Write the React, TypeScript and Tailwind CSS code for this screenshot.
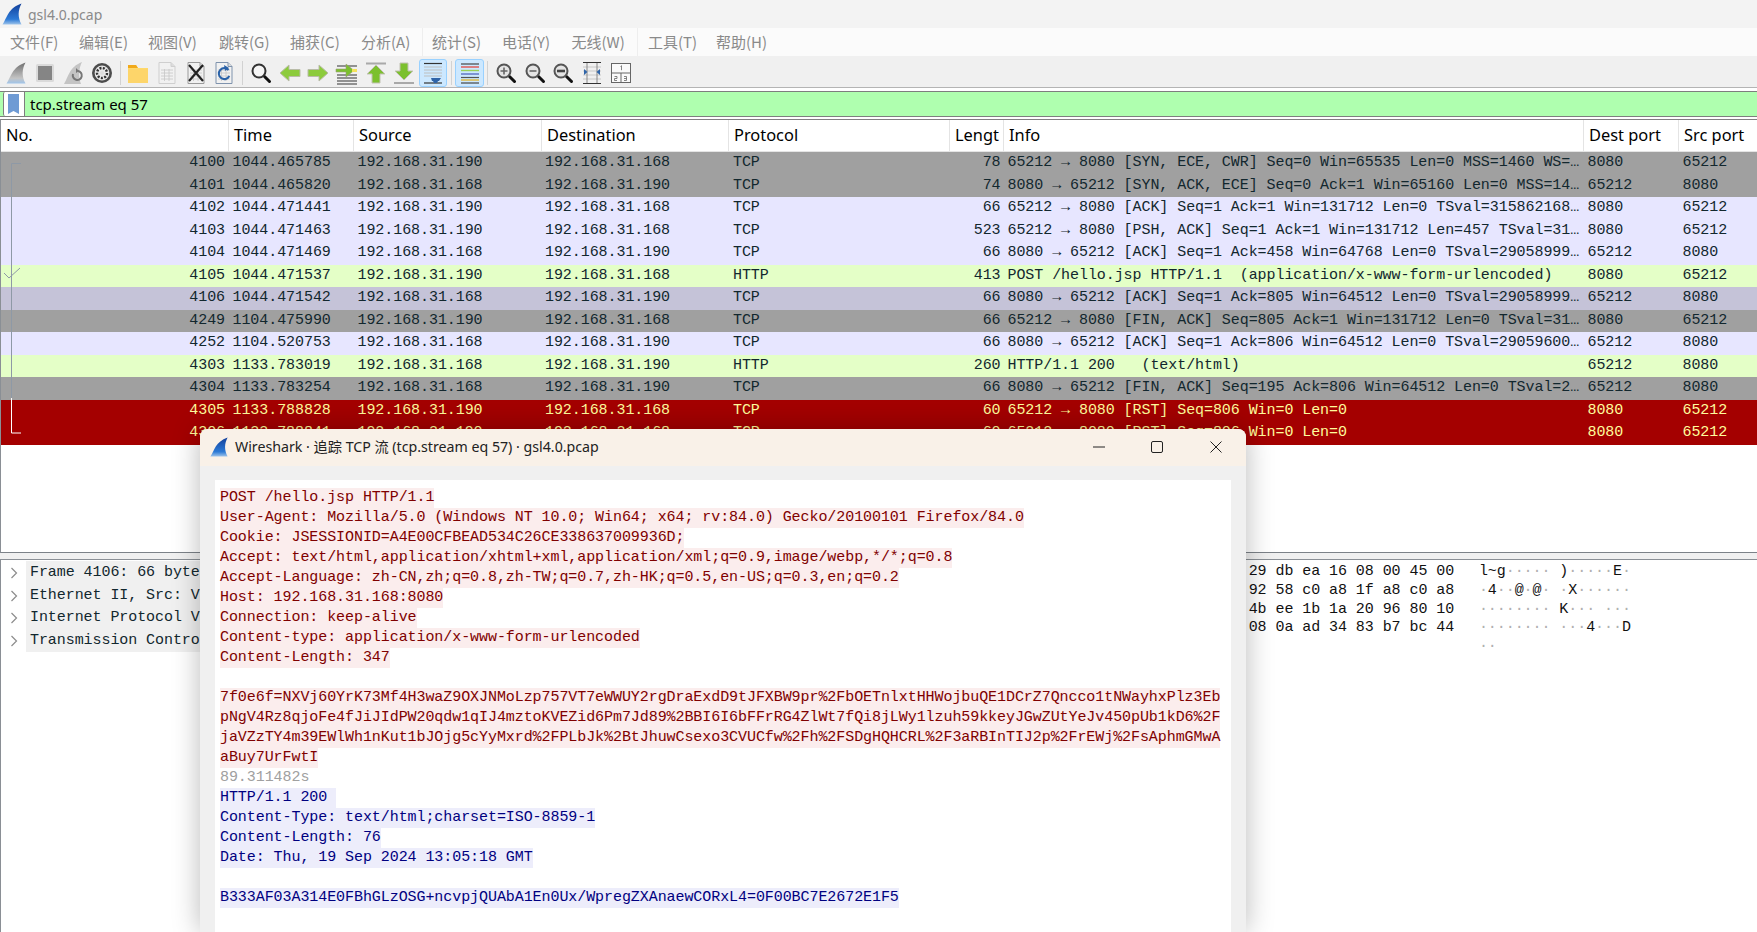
import React from "react";

const MONO = "[font-family:'Liberation_Mono',monospace] text-[15px] tracking-[-0.07px]";
const UI = "[font-family:'Noto_Sans','Noto_Sans_CJK_SC',sans-serif]";
const CJK = "[font-family:'Noto_Sans_CJK_SC','Noto_Sans',sans-serif]";

type Row = { n: number; t: string; s: string; d: string; p: string; l: number; i: string; dp: string; sp: string; k: string };
const A = "192.168.31.190";
const B = "192.168.31.168";
const rows: Row[] = [
  { n: 4100, t: "1044.465785", s: A, d: B, p: "TCP", l: 78, i: "65212 → 8080 [SYN, ECE, CWR] Seq=0 Win=65535 Len=0 MSS=1460 WS=…", dp: "8080", sp: "65212", k: "bg-[#a0a0a0] text-[#12272e]" },
  { n: 4101, t: "1044.465820", s: B, d: A, p: "TCP", l: 74, i: "8080 → 65212 [SYN, ACK, ECE] Seq=0 Ack=1 Win=65160 Len=0 MSS=14…", dp: "65212", sp: "8080", k: "bg-[#a0a0a0] text-[#12272e]" },
  { n: 4102, t: "1044.471441", s: A, d: B, p: "TCP", l: 66, i: "65212 → 8080 [ACK] Seq=1 Ack=1 Win=131712 Len=0 TSval=315862168…", dp: "8080", sp: "65212", k: "bg-[#e7e6ff] text-[#12272e]" },
  { n: 4103, t: "1044.471463", s: A, d: B, p: "TCP", l: 523, i: "65212 → 8080 [PSH, ACK] Seq=1 Ack=1 Win=131712 Len=457 TSval=31…", dp: "8080", sp: "65212", k: "bg-[#e7e6ff] text-[#12272e]" },
  { n: 4104, t: "1044.471469", s: B, d: A, p: "TCP", l: 66, i: "8080 → 65212 [ACK] Seq=1 Ack=458 Win=64768 Len=0 TSval=29058999…", dp: "65212", sp: "8080", k: "bg-[#e7e6ff] text-[#12272e]" },
  { n: 4105, t: "1044.471537", s: A, d: B, p: "HTTP", l: 413, i: "POST /hello.jsp HTTP/1.1  (application/x-www-form-urlencoded)", dp: "8080", sp: "65212", k: "bg-[#e4ffc7] text-[#12272e]" },
  { n: 4106, t: "1044.471542", s: B, d: A, p: "TCP", l: 66, i: "8080 → 65212 [ACK] Seq=1 Ack=805 Win=64512 Len=0 TSval=29058999…", dp: "65212", sp: "8080", k: "bg-[#c5c3d8] text-[#12272e]" },
  { n: 4249, t: "1104.475990", s: A, d: B, p: "TCP", l: 66, i: "65212 → 8080 [FIN, ACK] Seq=805 Ack=1 Win=131712 Len=0 TSval=31…", dp: "8080", sp: "65212", k: "bg-[#a0a0a0] text-[#12272e]" },
  { n: 4252, t: "1104.520753", s: B, d: A, p: "TCP", l: 66, i: "8080 → 65212 [ACK] Seq=1 Ack=806 Win=64512 Len=0 TSval=29059600…", dp: "65212", sp: "8080", k: "bg-[#e7e6ff] text-[#12272e]" },
  { n: 4303, t: "1133.783019", s: B, d: A, p: "HTTP", l: 260, i: "HTTP/1.1 200   (text/html)", dp: "65212", sp: "8080", k: "bg-[#e4ffc7] text-[#12272e]" },
  { n: 4304, t: "1133.783254", s: B, d: A, p: "TCP", l: 66, i: "8080 → 65212 [FIN, ACK] Seq=195 Ack=806 Win=64512 Len=0 TSval=2…", dp: "65212", sp: "8080", k: "bg-[#a0a0a0] text-[#12272e]" },
  { n: 4305, t: "1133.788828", s: A, d: B, p: "TCP", l: 60, i: "65212 → 8080 [RST] Seq=806 Win=0 Len=0", dp: "8080", sp: "65212", k: "bg-[#a40000] text-[#fffc9c]" },
  { n: 4306, t: "1133.788841", s: A, d: B, p: "TCP", l: 60, i: "65212 → 8080 [RST] Seq=806 Win=0 Len=0", dp: "8080", sp: "65212", k: "bg-[#a40000] text-[#fffc9c]" },
];

const GRID = "grid grid-cols-[228px_125px_188px_187px_221px_54px_580px_95px_79px]";

const Fin = ({ id, from, to, className }: { id: string; from: string; to: string; className?: string }) => (
  <svg viewBox="0 0 20 22" className={className}>
    <defs>
      <linearGradient id={id} x1="0" y1="0" x2="0" y2="1">
        <stop offset="0" stopColor={from} />
        <stop offset="0.75" stopColor={to} />
        <stop offset="1" stopColor="#9fc4ea" />
      </linearGradient>
    </defs>
    <path d="M0.5 21.5 C5 15 6 5 19.5 0.5 C16 7 15.5 14 19.5 21.5 Z" fill={`url(#${id})`} />
  </svg>
);

const Page = ({ stroke = "#9a9a9a", children }: { stroke?: string; children?: React.ReactNode }) => (
  <>
    <path d="M3 1.5h12l4 4v17H3z" fill="#f1f1f1" stroke={stroke} />
    <path d="M15 1.5v4h4" fill="#dcdcdc" stroke={stroke} />
    <path d="M5 9h12M5 12h12M5 15h12M5 18h12M8.5 8v12M13 8v12" stroke="#c6c6c6" strokeWidth="0.8" />
    {children}
  </>
);

const Mag = ({ kind }: { kind: "find" | "in" | "out" | "norm" }) => (
  <>
    <path d="M15.5 15.5l5 5" stroke="#111" strokeWidth="3" strokeLinecap="round" />
    <circle cx="10" cy="10" r="6.5" fill={kind === "find" ? "#f6f6f6" : "#e4e4e4"} stroke={kind === "find" ? "#333" : "#555"} strokeWidth="2" />
    {kind === "in" && <path d="M6.5 10h7M10 6.5v7" stroke="#666" strokeWidth="1.6" />}
    {kind === "out" && <path d="M6.5 10h7" stroke="#666" strokeWidth="1.6" />}
    {kind === "norm" && <path d="M6 10h8" stroke="#444" strokeWidth="2.6" />}
  </>
);

const icons: React.ReactNode[] = [
  <Fin id="g1" from="#6f6f6f" to="#c4c4c4" className="h-[22px] w-[20px]" />,
  <svg viewBox="0 0 24 24" className="h-6 w-6"><rect x="3" y="3" width="18" height="18" rx="1.5" fill="#dadada" /><rect x="5" y="5" width="14" height="14" fill="#858585" /></svg>,
  <svg viewBox="0 0 24 24" className="h-6 w-6"><path d="M3 23C7 17 8 6 21 1c-3 6-4 14-1 22z" fill="#c4c4c4" /><path d="M12 13a4.5 4.5 0 1 0 5-3" fill="none" stroke="#777" strokeWidth="2" /><path d="M15 7l3 3-3 2z" fill="#777" /></svg>,
  <svg viewBox="0 0 24 24" className="h-6 w-6"><circle cx="12" cy="12" r="10" fill="#4c4c4c" /><circle cx="12" cy="12" r="7.4" fill="#e8e8e8" /><circle cx="12" cy="12" r="5" fill="none" stroke="#333" strokeWidth="2.4" strokeDasharray="2 1.4" /><circle cx="12" cy="12" r="2" fill="#ddd" /></svg>,
  "|",
  <svg viewBox="0 0 24 24" className="h-6 w-6"><path d="M2 4h8l2 3h10v15H2z" fill="#ffd96a" /><path d="M2 4h8l2 3H2z" fill="#f1a91a" /><path d="M2 8h20v14H2z" fill="#fdd56a" /></svg>,
  <svg viewBox="0 0 22 24" className="h-6 w-[22px]"><Page stroke="#cfcfcf" /></svg>,
  <svg viewBox="0 0 22 24" className="h-6 w-[22px]"><Page><path d="M4 4l14 16M18 4L4 20" stroke="#222" strokeWidth="2.2" /></Page></svg>,
  <svg viewBox="0 0 22 24" className="h-6 w-[22px]"><Page stroke="#7f93ad"><path d="M15.5 9a5.5 5.5 0 1 0 .8 6" fill="none" stroke="#2a62a8" strokeWidth="2" /><path d="M11 4l5 3-4 3z" fill="#2a62a8" /></Page></svg>,
  "|",
  <svg viewBox="0 0 24 24" className="h-6 w-6"><Mag kind="find" /></svg>,
  <svg viewBox="0 0 24 24" className="h-6 w-6"><path d="M2 12l9-8v4.5h11v7H11V20z" fill="#8ccb3c" stroke="#b9bca8" /></svg>,
  <svg viewBox="0 0 24 24" className="h-6 w-6"><path d="M22 12l-9-8v4.5H2v7h11V20z" fill="#8ccb3c" stroke="#b9bca8" /></svg>,
  <svg viewBox="0 0 24 24" className="h-6 w-6"><path d="M2 5h20M2 14h20M2 17h20M2 20h20M2 23h20" stroke="#333" strokeWidth="1" /><path d="M1 8h10V3l8 6.5-8 6.5v-5H1z" fill="#7cc02e" stroke="#9a9a7a" strokeWidth="0.6" /><rect x="17" y="8" width="5" height="3" fill="#f3e25c" /></svg>,
  <svg viewBox="0 0 24 24" className="h-6 w-6"><path d="M2 2.5h20" stroke="#a9a9a9" strokeWidth="2" /><path d="M12 4l9 9h-5v9H8v-9H3z" fill="#7cc02e" stroke="#c2c2b4" /></svg>,
  <svg viewBox="0 0 24 24" className="h-6 w-6"><path d="M2 22h20" stroke="#a9a9a9" strokeWidth="2" /><path d="M12 19l9-9h-5V2H8v8H3z" fill="#7cc02e" stroke="#c2c2b4" /></svg>,
  <svg viewBox="0 0 24 24" className="h-6 w-6"><path d="M3 2.5h18" stroke="#333" strokeWidth="1.2" /><path d="M3 6h18M3 9h18M3 12h18M3 15h18" stroke="#bdbdbd" strokeWidth="1.2" /><path d="M3 22h18" stroke="#333" strokeWidth="1.2" /><path d="M10 17h10l-2 3h-1l-1 2h-3l-1-2h-1z" fill="#2f64a8" /></svg>,
  "|",
  <svg viewBox="0 0 24 24" className="h-6 w-6"><path d="M3 3h18" stroke="#444" strokeWidth="1.2" /><path d="M3 6h18" stroke="#e0544c" strokeWidth="1.4" /><path d="M3 9.5h18" stroke="#9ad05a" strokeWidth="1.4" /><path d="M3 13h18" stroke="#5b6fc0" strokeWidth="1.4" /><path d="M3 16.5h18" stroke="#555" strokeWidth="1.2" /><path d="M3 19h18" stroke="#e0b83a" strokeWidth="1.4" /><path d="M3 22h18" stroke="#444" strokeWidth="1.2" /></svg>,
  "|",
  <svg viewBox="0 0 24 24" className="h-6 w-6"><Mag kind="in" /></svg>,
  <svg viewBox="0 0 24 24" className="h-6 w-6"><Mag kind="out" /></svg>,
  <svg viewBox="0 0 24 24" className="h-6 w-6"><Mag kind="norm" /></svg>,
  <svg viewBox="0 0 24 24" className="h-6 w-6"><path d="M3 1.5h18M3 22.5h18" stroke="#333" strokeWidth="1.2" /><path d="M3 6h18M3 10h18M3 14h18M3 18h18" stroke="#c8c8c8" /><path d="M7 2v20M17 2v20" stroke="#888" /><path d="M4 8l3.5 3L4 14zM20 8l-3.5 3 3.5 3z" fill="#2f64a8" /></svg>,
  <svg viewBox="0 0 24 24" className="h-6 w-6"><rect x="2.5" y="2.5" width="19" height="19" fill="#fafafa" stroke="#666" /><path d="M2.5 12h19M12 12v9.5" stroke="#666" /><path d="M11.5 5.5l1-.8v4.5" fill="none" stroke="#666" strokeWidth="0.8" /><path d="M5.5 15.5h2.5v2h-2.5v2H8M15 15.5h2.5v4H15M15 17.5h2.5" fill="none" stroke="#666" strokeWidth="0.8" /></svg>,
];

const Menu = ({ label, w }: { label: string; w: string }) => <div className={`${w} shrink-0 whitespace-nowrap`}>{label}</div>;

const request = [
  "POST /hello.jsp HTTP/1.1",
  "User-Agent: Mozilla/5.0 (Windows NT 10.0; Win64; x64; rv:84.0) Gecko/20100101 Firefox/84.0",
  "Cookie: JSESSIONID=A4E00CFBEAD534C26CE338637009936D;",
  "Accept: text/html,application/xhtml+xml,application/xml;q=0.9,image/webp,*/*;q=0.8",
  "Accept-Language: zh-CN,zh;q=0.8,zh-TW;q=0.7,zh-HK;q=0.5,en-US;q=0.3,en;q=0.2",
  "Host: 192.168.31.168:8080",
  "Connection: keep-alive",
  "Content-type: application/x-www-form-urlencoded",
  "Content-Length: 347",
  "",
  "7f0e6f=NXVj60YrK73Mf4H3waZ9OXJNMoLzp757VT7eWWUY2rgDraExdD9tJFXBW9pr%2FbOETnlxtHHWojbuQE1DCrZ7Qncco1tNWayhxPlz3Eb",
  "pNgV4Rz8qjoFe4fJiJIdPW20qdw1qIJ4mztoKVEZid6Pm7Jd89%2BBI6I6bFFrRG4ZlWt7fQi8jLWy1lzuh59kkeyJGwZUtYeJv450pUb1kD6%2F",
  "jaVZzTY4m39EWlWh1nKut1bJOjg5cYyMxrd%2FPLbJk%2BtJhuwCsexo3CVUCfw%2Fh%2FSDgHQHCRL%2F3aRBInTIJ2p%2FrEWj%2FsAphmGMwA",
  "aBuy7UrFwtI",
];
const response = [
  "HTTP/1.1 200 ",
  "Content-Type: text/html;charset=ISO-8859-1",
  "Content-Length: 76",
  "Date: Thu, 19 Sep 2024 13:05:18 GMT",
  "",
  "B333AF03A314E0FBhGLzOSG+ncvpjQUAbA1En0Ux/WpregZXAnaewCORxL4=0F00BC7E2672E1F5",
];

const StreamLine = ({ text, k }: { text: string; k: string }) =>
  text === "" ? <div className="h-5" /> : <div className={`h-5 w-fit whitespace-pre leading-5 ${k}`}>{text}</div>;

const hexLines: [string, string][] = [
  ["29 db ea 16 08 00 45 00", "l~g····· )·····E·"],
  ["92 58 c0 a8 1f a8 c0 a8", "·4··@·@· ·X······"],
  ["4b ee 1b 1a 20 96 80 10", "········ K··· ···"],
  ["08 0a ad 34 83 b7 bc 44", "········ ···4···D"],
  ["                       ", "··"],
];

const Ascii = ({ s }: { s: string }) => (
  <span className="ml-[-2px]">
    {s.split("").map((c, i) => (
      <span key={i} className={c === "·" ? "text-[#b0b0b0]" : ""}>{c}</span>
    ))}
  </span>
);

const details = [
  "Frame 4106: 66 bytes on wire (528 bits), 66 bytes captured (528 bits) on interface",
  "Ethernet II, Src: VMware_29:db:ea, Dst: XiaomiEl_67:00:00",
  "Internet Protocol Version 4, Src: 192.168.31.168, Dst: 192.168.31.190",
  "Transmission Control Protocol, Src Port: 8080, Dst Port: 65212, Seq: 1, Ack: 805",
];

export default function App() {
  return (
    <div className="relative flex h-[932px] w-[1757px] flex-col overflow-hidden bg-white">
      {/* title bar */}
      <div className="flex h-[28px] shrink-0 items-center bg-[#f3f3f3] pl-[2px]">
        <Fin id="g2" from="#123f9a" to="#2c7ad6" className="h-[22px] w-[20px]" />
        <span className={`ml-[6px] text-[14px] text-[#8a8a8a] ${UI}`}>gsl4.0.pcap</span>
      </div>
      {/* menu */}
      <div className={`flex h-[28px] shrink-0 items-center bg-[#fbfbfb] pl-[10px] text-[15px] text-[#8a8a8a] ${CJK}`}>
        <Menu label="文件(F)" w="w-[69px]" />
        <Menu label="编辑(E)" w="w-[69px]" />
        <Menu label="视图(V)" w="w-[71px]" />
        <Menu label="跳转(G)" w="w-[71px]" />
        <Menu label="捕获(C)" w="w-[71px]" />
        <Menu label="分析(A)" w="w-[61px]" />
        <div className="mr-[9px] h-[28px] w-px bg-[#eeeeee]" />
        <Menu label="统计(S)" w="w-[70px]" />
        <Menu label="电话(Y)" w="w-[69.5px]" />
        <Menu label="无线(W)" w="w-[65.5px]" />
        <div className="mr-[10px] h-[28px] w-px bg-[#eeeeee]" />
        <Menu label="工具(T)" w="w-[68px]" />
        <Menu label="帮助(H)" w="w-[70px]" />
      </div>
      {/* toolbar */}
      <div className="flex h-[32px] shrink-0 items-center border-b border-b-[#b4b4b4] bg-[#f0f0f0] pl-[1.5px] pt-[2px]">
        {icons.map((ic, i) =>
          ic === "|" ? (
            <div key={i} className="mx-[3.4px] h-[24px] w-px bg-[#d2d2d2]" />
          ) : (
            <div
              key={i}
              className={`flex h-[28px] w-[28.7px] items-center justify-center rounded-[3px] ${i === 16 || i === 18 ? "border border-[#99d1ff] bg-[#cce8ff]" : ""}`}
            >
              {ic}
            </div>
          )
        )}
      </div>
      {/* filter */}
      <div className="mt-[3px] flex h-[26px] shrink-0 border-y border-y-[#7e7e7e] bg-[#afffaf] pl-[3px]">
        <div className="flex h-full w-[22px] items-center rounded-l-[2px] border-x border-x-[#7e7e7e] bg-white pl-[4px]">
          <svg viewBox="0 0 11 20" className="h-[20px] w-[11px]"><path d="M0 0h11v20l-5.5-3L0 20z" fill="#6f9bd4" /></svg>
        </div>
        <span className={`pl-[5px] text-[15px] leading-[24px] text-black ${UI}`}>tcp.stream eq 57</span>
      </div>
      {/* packet list */}
      <div className="relative mt-[2px] h-[434px] shrink-0 border-t border-b border-l border-t-[#808080] border-b-[#7c8288] border-l-[#8a8f95]">
        <div className={`${GRID} h-[32px] items-center border-b border-b-[#e4e4e4] text-[16.4px] text-black ${UI}`}>
          {["No.", "Time", "Source", "Destination", "Protocol", "Lengt", "Info", "Dest port", "Src port"].map((h) => (
            <div key={h} className="flex h-full items-center overflow-hidden whitespace-nowrap border-r border-r-[#e4e4e4] pl-[5px]">{h}</div>
          ))}
        </div>
        {rows.map((r) => (
          <div key={r.n} className={`${GRID} h-[22.5px] items-center whitespace-pre leading-[22px] ${MONO} ${r.k}`}>
            <div className="pr-[4px] text-right">{r.n}</div>
            <div className="pl-[3.5px]">{r.t}</div>
            <div className="pl-[3.5px]">{r.s}</div>
            <div className="pl-[3px]">{r.d}</div>
            <div className="pl-[4px]">{r.p}</div>
            <div className="pr-[3.5px] text-right">{r.l}</div>
            <div className="overflow-hidden pl-[3.5px]">{r.i}</div>
            <div className="pl-[3.5px]">{r.dp}</div>
            <div className="pl-[3.5px]">{r.sp}</div>
          </div>
        ))}
        {/* conversation bracket over the first column */}
        <svg className="absolute left-0 top-[32px] h-[293px] w-[24px]" viewBox="0 0 24 293">
          <path d="M20 11.5H10.5V280" fill="none" stroke="#8e99a6" strokeWidth="1" />
          <path d="M10.5 246V281H20" fill="none" stroke="#ffffff" strokeWidth="1" />
          <path d="M3 121l5 5 11-10" fill="none" stroke="#8e99a6" strokeWidth="1" />
        </svg>
      </div>
      <div className="h-[6px] shrink-0 bg-[#f0f0f0]" />
      {/* details + bytes */}
      <div className="flex flex-1 border-t border-t-[#8a8f95]">
        <div className={`w-[900px] shrink-0 border-l border-l-[#8a8f95] pl-[25px] pt-[1px] ${MONO} text-[#12272e]`}>
          <div className="bg-[#f0f0f0] pl-[4px] pt-[1px]">
            {details.map((d) => (
              <div key={d} className="relative h-[22.5px] whitespace-pre leading-[22px]">
                {d}
                <svg viewBox="0 0 8 12" className="absolute left-[-20px] top-[5px] h-[12px] w-[8px]"><path d="M1.5 1l5 5-5 5" fill="none" stroke="#8c8c8c" strokeWidth="1.2" /></svg>
              </div>
            ))}
          </div>
        </div>
        <div className={`pl-[348.7px] pt-[2px] ${MONO} text-[#111]`}>
          {hexLines.map(([h, a], i) => (
            <div key={i} className="h-[18.8px] whitespace-pre leading-[19px]">
              {h}{"   "}<Ascii s={a} />
            </div>
          ))}
        </div>
      </div>
      {/* follow stream window */}
      <div className="absolute left-[200px] top-[429px] flex h-[503px] w-[1046px] flex-col rounded-t-[8px] bg-[#f0f0f0] shadow-[0_0_28px_rgba(0,0,0,0.28)]">
        <div className="flex h-[37px] shrink-0 items-center rounded-t-[8px] bg-[#f9f1e8] pb-[2px] pl-[9px]">
          <Fin id="g3" from="#123f9a" to="#2c7ad6" className="h-[20px] w-[20px]" />
          <span className={`ml-[6px] text-[14.2px] text-[#222] ${UI}`}>Wireshark · 追踪 TCP 流 (tcp.stream eq 57) · gsl4.0.pcap</span>
          <div className="ml-auto flex h-full items-center">
            <svg viewBox="0 0 12 12" className="h-[12px] w-[12px]"><path d="M0 6h12" stroke="#222" /></svg>
            <svg viewBox="0 0 12 12" className="ml-[46px] h-[12px] w-[12px]"><rect x="0.5" y="0.5" width="11" height="11" rx="1.5" fill="none" stroke="#222" /></svg>
            <svg viewBox="0 0 12 12" className="ml-[47px] mr-[24px] h-[12px] w-[12px]"><path d="M0.5 0.5l11 11M11.5 0.5l-11 11" stroke="#222" /></svg>
          </div>
        </div>
        <div className="mx-[15px] mt-[14px] flex-1 bg-white pl-[5px] pt-[7.5px]">
          <div className={MONO}>
            {request.map((l, i) => <StreamLine key={i} text={l} k="bg-[#fbeded] text-[#800000]" />)}
            <div className="h-5 leading-5 text-[#a0a0a0]">89.311482s</div>
            {response.map((l, i) => <StreamLine key={i} text={l} k="bg-[#ededfb] text-[#000080]" />)}
          </div>
        </div>
      </div>
    </div>
  );
}
